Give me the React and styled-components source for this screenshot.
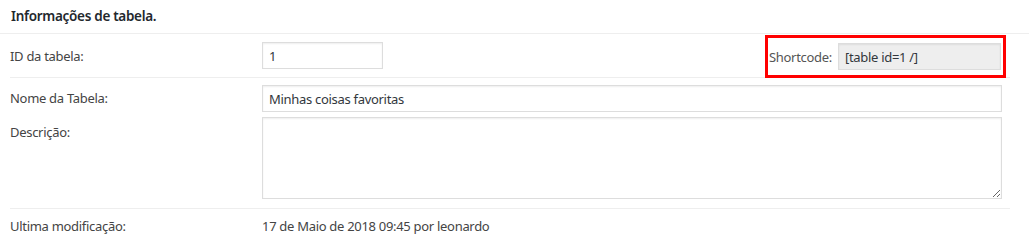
import React from "react"
import styled, { createGlobalStyle } from "styled-components"

const GlobalStyle = createGlobalStyle`
  body {
    margin: 0;
    background: #fff;
    font-family: "Noto Sans", "Open Sans", sans-serif;
    font-size: 13px;
    letter-spacing: -0.3px;
    color: #444;
  }
`

const Panel = styled.div`
  width: 1029px;
`

const Heading = styled.h2`
  margin: 0;
  height: 34px;
  box-sizing: border-box;
  padding: 7px 11px 0;
  font-size: 13.5px;
  font-weight: 600;
  color: #23282d;
  border-bottom: 1px solid #eee;
`

const Body = styled.div`
  padding: 0 19px 0 10px;
`

const Row = styled.div`
  display: grid;
  grid-template-columns: 252px 1fr;
  align-items: ${p => (p.$top ? "start" : "center")};
  height: ${p => p.$height}px;
  box-sizing: border-box;
  padding-top: ${p => p.$pad || 0}px;
  border-bottom: ${p => (p.$line ? "1px solid #eee" : "none")};
`

const Label = styled.div`
  color: #444;
  padding-top: ${p => p.$pad || 0}px;
`

const Cell = styled.div`
  display: flex;
  align-items: center;
  height: 100%;
`

const TextInput = styled.input`
  box-sizing: border-box;
  width: ${p => p.$width || "calc(100% - 8px)"};
  height: ${p => p.$height || 27}px;
  margin: 0;
  padding: 0 6px;
  border: 1px solid #ddd;
  border-radius: 0;
  box-shadow: inset 0 1px 2px rgba(0, 0, 0, 0.07);
  background: ${p => (p.$readOnly ? "#eee" : "#fff")};
  font-family: inherit;
  font-size: 13px;
  letter-spacing: -0.3px;
  color: #32373c;
  outline: none;
`

const TextArea = styled.textarea`
  box-sizing: border-box;
  width: calc(100% - 8px);
  height: 82px;
  margin: 0;
  border: 1px solid #ddd;
  border-radius: 0;
  box-shadow: inset 0 1px 2px rgba(0, 0, 0, 0.07);
  font-family: inherit;
  font-size: 13px;
  outline: none;
`

const ShortcodeBox = styled.div`
  margin-left: auto;
  margin-right: 4px;
  align-self: stretch;
  margin-top: 1px;
  margin-bottom: -1px;
  display: flex;
  align-items: center;
  gap: 6px;
  padding: 0 2px 0 1px;
  border: 3px solid #f00;
`

const ShortcodeLabel = styled.span`
  color: #555;
`

const Meta = styled.div`
  color: #444;
`

export default function App() {
  return (
    <Panel>
      <GlobalStyle />
      <Heading>Informações de tabela.</Heading>
      <Body>
        <Row $height={44} $line>
          <Label>ID da tabela:</Label>
          <Cell>
            <TextInput $width="121px" defaultValue="1" />
            <ShortcodeBox>
              <ShortcodeLabel>Shortcode:</ShortcodeLabel>
              <TextInput
                $width="163px"
                $readOnly
                readOnly
                defaultValue="[table id=1 /]"
              />
            </ShortcodeBox>
          </Cell>
        </Row>
        <Row $height={39} $pad={7} $top>
          <Label $pad={4}>Nome da Tabela:</Label>
          <TextInput $height={27} defaultValue="Minhas coisas favoritas" />
        </Row>
        <Row $height={92} $line $top>
          <Label $pad={6}>Descrição:</Label>
          <TextArea />
        </Row>
        <Row $height={34}>
          <Label>Ultima modificação:</Label>
          <Meta>17 de Maio de 2018 09:45 por leonardo</Meta>
        </Row>
      </Body>
    </Panel>
  )
}
